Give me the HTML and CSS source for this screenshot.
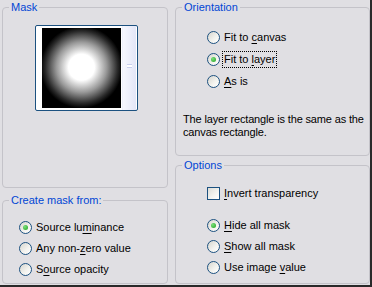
FILE: index.html
```html
<!DOCTYPE html>
<html lang="en">

<head>
    <meta charset="UTF-8">
    <title>Mask from image</title>
    <link rel="stylesheet" href="styles.css">
</head>

<body>
    <div class="dialog">
        <!-- Left column -->
        <div class="column">
            <fieldset class="group mask-group">
                <legend>Mask</legend>
                <div class="preview">
                    <div class="preview-image"></div>
                    <div class="preview-scroll"><span class="grip"></span></div>
                </div>
            </fieldset>

            <fieldset class="group source-group">
                <legend>Create mask from:</legend>
                <div class="options-list">
                    <div class="row"><span class="radio checked"></span><span class="label">Source lu<u>m</u>inance</span></div>
                    <div class="row"><span class="radio"></span><span class="label">Any non-<u>z</u>ero value</span></div>
                    <div class="row"><span class="radio"></span><span class="label">S<u>o</u>urce opacity</span></div>
                </div>
            </fieldset>
        </div>

        <!-- Right column -->
        <div class="column">
            <fieldset class="group orientation-group">
                <legend>Orientation</legend>
                <div class="options-list">
                    <div class="row tall"><span class="radio"></span><span class="label">Fit to <u>c</u>anvas</span></div>
                    <div class="row tall"><span class="radio checked"></span><span class="label focused">Fit to <u>l</u>ayer</span></div>
                    <div class="row tall"><span class="radio"></span><span class="label"><u>A</u>s is</span></div>
                </div>
                <p class="note">The layer rectangle is the same as the<br>canvas rectangle.</p>
            </fieldset>

            <fieldset class="group options-group">
                <legend>Options</legend>
                <div class="options-list">
                    <div class="row tall"><span class="checkbox"></span><span class="label"><u>I</u>nvert transparency</span></div>
                </div>
                <div class="options-list spaced">
                    <div class="row"><span class="radio checked"></span><span class="label"><u>H</u>ide all mask</span></div>
                    <div class="row"><span class="radio"></span><span class="label"><u>S</u>how all mask</span></div>
                    <div class="row"><span class="radio"></span><span class="label">Use image <u>v</u>alue</span></div>
                </div>
            </fieldset>
        </div>
    </div>
</body>

</html>
```

FILE: styles.css
```css
/* Reset */
* {
    margin: 0;
    padding: 0;
    box-sizing: border-box;
}

body {
    font-family: "Liberation Sans", Arial, sans-serif;
    font-size: 11px;
    color: #000;
    background-color: #e0dfe3;
}

u {
    text-decoration-thickness: 1px;
    text-underline-offset: 2px;
}

/* Dialog frame */
.dialog {
    width: 372px;
    height: 287px;
    display: grid;
    grid-template-columns: 166px 195px;
    column-gap: 7px;
    padding-left: 2px;
    background-color: #e0dfe3;
    border-right: 2px solid #2a2a2a;
    border-bottom: 2px solid #2a2a2a;
    overflow: hidden;
}

.column {
    display: flex;
    flex-direction: column;
}

/* Group boxes */
.group {
    border: 1px solid #c4c3c9;
    border-radius: 4px;
    min-width: 0;
}

.group legend {
    color: #0046d5;
    font-size: 11px;
    line-height: 14px;
    margin-left: 6px;
    padding: 0 2px;
}

.mask-group {
    height: 188px;
}

.source-group {
    height: 91px;
    margin-top: 5px;
}

.orientation-group {
    height: 156px;
}

.options-group {
    height: 126px;
    margin-top: 2px;
}

/* Mask preview */
.preview {
    width: 103px;
    height: 86px;
    margin: 11px 0 0 32px;
    display: flex;
    padding: 2px 1px 2px 6px;
    background-color: #fff;
    border: 1px solid #1c5180;
    border-radius: 2px;
}

.preview-image {
    width: 79px;
    height: 80px;
    background: radial-gradient(circle at 50% 49%, #fff 0, #fff 13px, #9a9a9a 25px, #2a2a2a 36px, #000 41px);
}

.preview-scroll {
    position: relative;
    width: 14px;
    margin-left: 1px;
    margin-top: -2px;
    margin-bottom: -2px;
    background: linear-gradient(to right, #f7f8fe, #e3e6f7);
    border-left: 1px solid #eef0fb;
}

.preview-scroll .grip {
    position: absolute;
    left: 4px;
    top: 38px;
    width: 5px;
    height: 4px;
    background-color: #fff;
    border-top: 1px solid #c9cfee;
    border-bottom: 1px solid #c9cfee;
}

/* Rows of radio buttons and checkboxes */
.options-list {
    display: flex;
    flex-direction: column;
}

.source-group .options-list {
    margin-top: 10px;
    padding-left: 16px;
}

.orientation-group .options-list {
    margin-top: 12px;
    padding-left: 31px;
}

.options-group .options-list {
    margin-top: 10px;
    padding-left: 31px;
}

.options-group .options-list.spaced {
    margin-top: 11px;
}

.row {
    display: flex;
    align-items: center;
    height: 21px;
}

.row.tall {
    height: 22px;
}

.label {
    margin-left: 2px;
    padding: 0 1px;
    line-height: 15px;
    border: 1px dotted transparent;
}

.label.focused {
    border-color: #000;
}

.radio {
    width: 13px;
    height: 13px;
    border: 1px solid #1c5180;
    border-radius: 50%;
    background: linear-gradient(135deg, #d6d5ce, #f4f4f0 60%, #fff);
    display: flex;
    align-items: center;
    justify-content: center;
    flex-shrink: 0;
}

.radio.checked::after {
    content: "";
    width: 5px;
    height: 5px;
    border-radius: 50%;
    background: radial-gradient(circle at 35% 35%, #7be07b, #21a121);
}

.checkbox {
    width: 13px;
    height: 13px;
    border: 1px solid #1c5180;
    background: linear-gradient(135deg, #dcdcd7, #f4f4f0 60%, #fff);
    flex-shrink: 0;
}

.note {
    margin: 21px 0 0 7px;
    line-height: 13px;
    letter-spacing: -0.15px;
    white-space: nowrap;
}
```
